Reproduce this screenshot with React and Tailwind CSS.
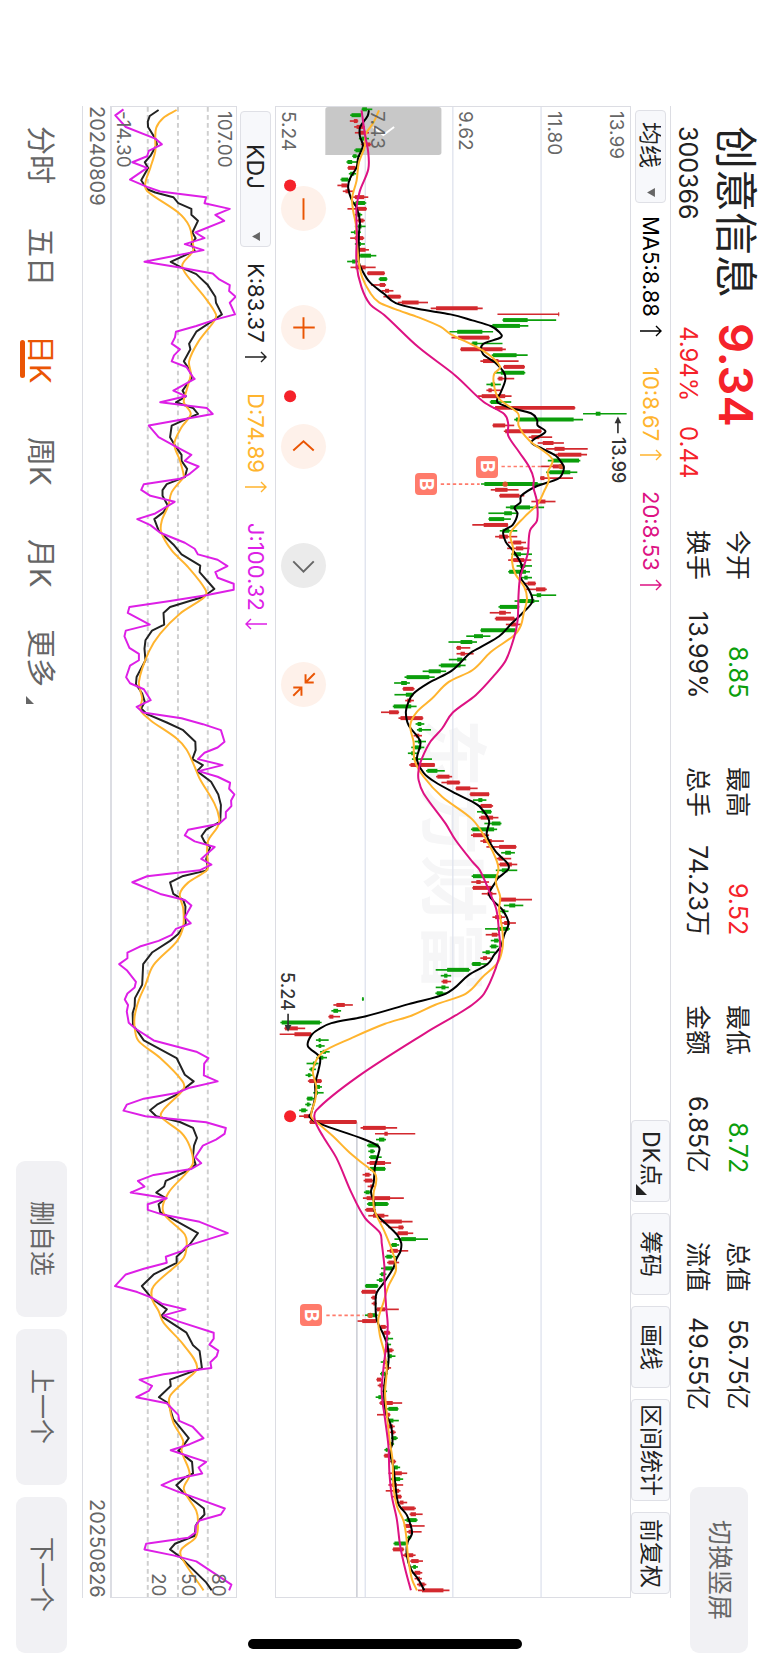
import React from "react";

const PITCH = 17.585;

// low, body low, body high, high, direction (1 = up, 0 = down)
const CANDLES = [
  [360,362,376,392,0],[326,330,358,358,0],[325,337,348,350,1],[338,345,365,370,1],[340,352,372,382,1],[352,360,375,382,0],[358,364,386,392,1],[338,342,362,368,0],[332,335,345,356,0],[315,318,332,348,0],
  [318,320,342,346,1],[322,326,338,344,0],[297,300,320,328,0],[288,300,318,322,1],[304,312,325,335,1],[335,340,368,380,1],[332,342,370,374,0],[318,345,374,376,1],[340,347,357,362,0],[340,350,366,370,1],
  [340,350,360,372,0],[328,338,348,358,0],[326,340,365,368,1],[340,348,358,370,0],[345,352,372,382,1],[350,356,388,404,0],[317,332,342,352,0],[327,342,372,402,1],[376,378,428,430,1],[411,414,435,437,0],
  [388,414,430,433,1],[420,430,442,455,1],[425,438,476,478,1],[468,480,530,558,1],[566,582,706,721,1],[765,946,949,949,1],[780,782,855,940,0],[745,750,832,857,0],[622,645,720,752,0],[628,648,740,742,1],
  [686,690,705,780,0],[654,656,780,790,1],[748,752,822,855,0],[714,722,768,828,1],[782,784,845,847,1],[755,775,845,848,0],[765,768,780,815,1],[732,745,758,775,0],[732,738,748,775,1],[706,718,788,807,1],
  [742,745,768,806,0],[752,758,995,997,1],[1020,1058,1072,1150,0],[815,820,992,1020,0],[750,752,788,815,1],[784,788,895,897,1],[858,866,890,928,1],[885,900,932,963,1],[910,935,965,1034,1],[938,945,1015,1032,1],
  [915,930,1008,1012,0],[895,930,960,965,1],[910,920,982,1003,0],[892,893,905,990,1],[716,726,885,900,0],[745,758,795,828,1],[770,772,830,845,1],[866,880,908,938,1],[790,803,862,904,0],[738,785,808,825,0],
  [738,740,785,805,0],[690,724,796,797,1],[772,780,800,824,0],[758,770,796,824,1],[796,812,836,850,1],[794,820,842,860,1],[806,815,835,868,0],[797,812,845,866,1],[822,832,848,868,0],[797,800,850,862,0],
  [832,845,855,868,0],[845,855,878,880,1],[850,880,908,912,1],[868,882,895,940,0],[816,830,875,889,0],[768,772,828,830,0],[742,770,790,805,1],[757,760,815,818,1],[790,805,820,838,1],[714,716,818,820,0],
  [672,695,722,744,0],[619,655,690,704,0],[642,644,656,684,1],[643,655,668,694,1],[620,645,660,672,0],[590,596,655,670,0],[542,560,596,612,0],[488,494,562,578,0],[457,478,495,504,0],[482,484,515,518,1],
  [458,492,512,515,0],[490,496,508,516,1],[453,456,508,524,0],[418,442,470,472,1],[470,476,542,544,1],[521,527,538,547,0],[525,530,540,567,0],[515,522,532,540,1],[518,528,538,552,0],[508,518,538,547,0],
  [498,508,518,525,0],[510,518,528,570,0],[502,506,578,579,1],[552,556,586,608,0],[582,586,622,630,1],[598,614,652,654,1],[640,642,684,706,1],[682,684,740,741,1],[692,708,720,732,0],[708,715,748,752,1],
  [704,718,746,748,0],[710,715,752,768,1],[726,748,774,777,0],[686,690,755,764,0],[686,692,728,740,1],[714,722,748,784,1],[732,770,820,822,1],[776,788,805,817,0],[760,768,782,806,1],[764,772,808,824,1],
  [760,778,795,824,0],[688,692,765,770,0],[687,702,715,740,1],[690,692,748,750,1],[718,735,750,762,1],[770,772,820,868,1],[784,800,818,842,0],[772,778,788,798,0],[750,758,778,788,1],[776,785,802,820,1],
  [728,765,798,802,0],[730,748,765,770,1],[745,755,768,772,0],[742,746,762,768,0],[720,730,742,757,0],[714,722,734,745,1],[688,690,715,735,0],[581,615,680,684,0],[596,606,616,627,0],[598,602,616,627,1],
  [581,598,610,620,0],[580,584,602,615,0],[361,362,366,367,0],[276,285,310,334,1],[270,276,290,299,0],[261,264,276,296,1],[118,122,236,241,0],[130,132,170,192,1],[116,160,210,212,1],[224,232,238,262,0],
  [224,232,240,250,0],[236,244,254,265,0],[225,236,246,257,0],[196,215,225,232,0],[204,208,216,224,0],[193,200,208,218,0],[200,204,240,242,1],[220,226,236,242,0],[216,222,230,247,0],[196,198,214,220,0],
  [192,197,205,210,0],[174,180,194,199,0],[174,188,204,208,1],[204,206,345,346,1],[357,364,432,466,1],[400,428,438,520,1],[403,412,428,433,0],[376,380,410,412,0],[380,386,396,400,0],[382,386,405,420,0],
  [376,384,430,448,1],[380,385,430,432,0],[363,370,384,389,1],[366,370,392,395,1],[378,386,392,402,1],[367,372,384,390,0],[364,375,445,486,1],[376,380,438,441,0],[370,374,398,402,1],[380,394,428,440,1],
  [415,424,480,512,1],[440,470,484,486,1],[460,468,498,514,1],[458,478,522,558,0],[446,450,465,472,0],[436,444,468,499,1],[430,434,450,465,0],[436,440,458,472,1],[418,430,452,458,0],[414,418,430,434,0],
  [405,412,422,428,0],[370,372,408,410,0],[359,361,402,404,1],[388,392,402,405,1],[390,395,402,405,1],[403,406,430,471,1],[370,378,404,408,0],[348,362,404,406,1],[412,416,432,438,1],[422,426,444,446,1],
  [432,436,440,454,0],[430,434,440,448,0],[426,432,452,456,1],[438,442,450,461,0],[417,424,434,440,0],[428,434,442,448,1],[415,418,430,438,0],[404,406,418,422,1],[408,413,422,427,1],[418,424,432,436,0],
  [402,410,418,424,0],[413,416,453,481,1],[434,440,468,470,0],[406,434,444,446,1],[438,442,455,471,0],[434,440,454,459,1],[444,450,458,462,1],[448,454,464,468,0],[440,446,454,457,0],[428,432,438,442,0],
  [426,428,445,447,1],[444,450,460,463,1],[452,457,468,475,0],[440,456,480,496,1],[444,450,475,484,0],[440,450,465,484,1],[432,456,472,476,1],[450,458,478,480,1],[465,474,485,496,1],[476,480,518,522,1],
  [503,506,522,542,1],[488,494,524,527,0],[486,490,510,548,1],[494,500,508,539,1],[493,498,505,508,0],[455,458,492,495,0],[452,454,485,487,1],[482,488,514,521,1],[505,508,530,543,1],[508,514,522,528,0],
  [512,518,535,541,1],[518,525,534,540,1],[525,530,548,553,1],[528,540,604,622,1],
];

// Each series is stored in four segments of 1170 units along the time axis.
const join = (parts) =>
  parts.flatMap((part, seg) =>
    part.trim().split(/\s+/).map((pair) => {
      const [v, t] = pair.split(",").map(Number);
      return [v, t + seg * 1170];
    })
  );

const straight = (pts) => "M" + pts.map((p) => p.join(" ")).join("L");

const smooth = (pts) => {
  let d = `M${pts[0][0]} ${pts[0][1]}`;
  for (let i = 0; i < pts.length - 1; i++) {
    const a = pts[i - 1] || pts[i];
    const b = pts[i];
    const c = pts[i + 1];
    const e = pts[i + 2] || c;
    const k = (c[1] - b[1]) / 3;
    const m1 = (c[0] - a[0]) / (c[1] - a[1] || 1);
    const m2 = (e[0] - b[0]) / (e[1] - b[1] || 1);
    d += `C${(b[0] + m1 * k).toFixed(1)} ${(b[1] + k).toFixed(1)} ${(c[0] - m2 * k).toFixed(1)} ${(c[1] - k).toFixed(1)} ${c[0]} ${c[1]}`;
  }
  return d;
};

const MA5 = join([
  "382,58 378,75 356,108 355,135 364,165 350,200 345,230 326,262 320,290 332,330 345,350 355,390 352,430 352,500 352,515 360,535 385,575 428,610 462,637 530,655 625,671 690,689 745,706 770,724 775,740 722,760 722,790 757,815 785,847 788,870 775,905 765,935 805,952 865,968 883,988 885,1005 908,1023 866,1055 900,1075 938,1095 955,1115 963,1130 958,1150 945,1165",
  "880,18 836,46 833,66 816,81 825,99 810,134 783,152 790,185 815,215 838,257 833,290 857,325 869,363 843,395 805,432 770,468 716,500 682,520 628,572 560,608 515,640 498,670 492,697 500,735 535,784 525,837 545,878 578,905 640,940 690,965 715,983 740,1022 733,1065 760,1115 795,1150 797,1168",
  "766,25 760,35 740,72 752,92 780,120 798,160 785,195 775,230 755,255 735,283 680,315 610,372 500,403 370,440 270,460 230,480 210,497 200,529 235,562 232,600 222,640 222,680 210,730 205,742 235,762 365,808 410,830 411,850 400,890 396,940 388,967 398,1000 400,1030 430,1060 465,1095 478,1120 476,1145 464,1168",
  "455,25 430,65 405,100 402,130 405,180 425,225 438,262 440,310 430,360 427,400 432,460 448,500 452,550 445,580 455,625 460,670 470,735 495,768 508,805 510,825 497,850 495,890 508,932 530,962 547,994",
]);
const MA10 = join([
  "412,58 395,95 372,130 370,165 352,215 345,270 332,320 335,360 343,400 346,450 352,515 362,560 385,605 412,635 460,655 530,680 595,708 625,730 722,780 773,828 755,850 755,885 770,925 826,968 828,1005 860,1050 928,1105 915,1145",
  "918,0 905,30 885,70 845,110 808,150 803,168 812,205 808,240 818,280 845,320 853,355 843,400 835,435 815,465 745,515 690,570 620,605 570,655 525,695 505,735 515,785 518,840 545,890 600,950 690,1018 735,1085 760,1135 768,1168",
  "760,35 773,80 770,120 780,185 780,235 765,280 720,322 670,372 580,405 510,437 430,462 330,505 245,547 215,600 225,650 222,690 210,740 235,765 275,800 320,845 355,875 400,912 403,940 396,970 398,1020 430,1090 450,1140",
  "460,5 462,35 440,80 425,130 410,180 415,230 428,280 435,330 430,400 435,460 443,540 452,600 455,680 465,740 485,785 493,830 498,890 510,960 525,994",
]);
const MA20 = join([
  "360,58 370,130 380,185 380,235 355,300 345,350 346,430 345,520 360,590 385,640 430,675 530,770 640,855 725,935 785,970 797,1000 797,1035 830,1085 860,1130 873,1165",
  "872,20 882,60 883,120 862,150 855,220 833,290 828,340 825,420 815,470 790,540 760,580 700,645 632,697 600,745 565,785 540,835 530,870 530,900 545,940 610,1030 640,1080 690,1145",
  "712,0 745,75 762,120 770,190 773,240 760,295 725,372 690,405 640,437 550,490 350,620 225,722 222,755 245,800 285,865 330,970 370,1045 415,1090 420,1120",
  "428,20 428,50 433,140 438,200 432,270 425,330 420,400 430,480 440,560 443,640 450,710 465,780 475,860 490,930 507,994",
]);
const K = join([
  "475,57 448,75 442,92 443,108 465,143 470,160 450,195 433,214 443,231 422,268 440,295 465,305 520,319 535,337 575,354 575,372 595,390 578,425 588,442 575,460 585,480 512,513 550,533 590,550 625,583 648,618 650,636 668,671 640,690 590,723 568,759 572,776 552,812 568,835 577,860 548,900 558,917 528,935 580,952 595,970 515,1005 510,1040 525,1065 545,1093 545,1111 562,1135 555,1160",
  "500,11 487,29 487,46 503,75 490,95 462,116 475,150 520,192 545,222 602,256 600,275 645,326 610,350 510,380 490,398 492,433 455,451 435,480 432,505 435,540 408,590 406,612 425,640 433,665 422,685 440,702 500,727 550,750 587,785 588,810 578,837 610,855 592,873 635,905 657,943 665,975 663,1025 620,1049 606,1068 615,1085 632,1101 620,1137 625,1160",
  "620,2 550,18 510,37 520,72 550,90 557,110 555,140 558,160 535,192 510,213 455,248 428,283 425,345 403,385 402,410 396,430 397,465 430,512 530,565 555,615 582,635 530,675 470,705 449,722 468,740 540,757 580,775 592,805 583,828 580,860 588,885 560,905 497,934 492,951 468,969 497,986 475,1004 480,1028 595,1091 570,1125 530,1162",
  "530,10 460,45 424,80 455,118 500,150 483,170 560,220 580,258 600,275 607,326 510,361 512,380 476,414 505,432 520,480 567,537 550,560 535,575 577,608 580,643 555,655 529,678 550,700 613,748 615,766 597,785 588,800 585,830 525,854 510,871 540,893 620,970 637,994",
]);
const D = join([
  "530,57 490,80 468,110 465,150 465,180 450,230 435,275 440,300 535,365 568,405 578,450 580,480 548,520 555,545 620,625 650,671 645,690 595,755 568,812 573,850 560,900 552,935 573,970 545,1010 523,1060 540,1110 552,1160",
  "543,0 515,35 505,75 485,120 483,155 515,210 565,260 618,328 615,350 540,400 480,460 445,515 415,605 425,655 420,690 450,720 530,775 560,808 585,860 600,895 645,970 660,1015 655,1040 625,1085 625,1160",
  "620,3 565,38 540,72 550,115 550,170 530,215 460,285 435,345 415,390 402,440 403,480 415,515 480,565 548,635 550,660 490,720 483,742 545,790 570,830 580,880 560,910 505,970 490,1030 555,1095 560,1135",
  "548,0 460,80 455,118 475,155 490,190 550,255 593,325 555,365 510,410 508,440 520,490 550,545 545,575 570,645 552,690 590,755 595,790 588,835 545,870 545,895 612,994",
]);
const J = join([
  "368,55 343,73 375,108 465,143 485,160 445,180 440,196 395,214 440,231 388,266 440,288 480,302 620,319 615,337 692,354 648,372 675,390 587,425 615,442 555,460 612,478 432,513 540,530 640,548 660,566 692,583 690,601 710,618 692,636 708,671 650,686 590,706 528,723 525,740 515,759 540,776 522,794 515,812 560,829 580,860 585,865 520,900 558,917 480,935 622,952 640,970 445,1005 475,1040 525,1067 575,1093 555,1111 597,1128 570,1150 545,1164",
  "430,11 422,28 450,46 524,64 465,99 410,116 450,134 480,157 555,187 585,205 595,222 655,238 685,257 648,275 655,292 704,310 704,328 620,345 510,362 386,380 381,398 448,433 375,451 371,468 386,503 415,521 415,540 388,556 376,591 388,609 430,627 451,660 408,680 428,697 545,714 610,732 665,750 676,785 655,802 615,818 595,837 670,855 597,873 655,890 693,908 690,926 706,943 696,961 697,978 680,996 680,1013 660,1031 565,1049 555,1066 585,1084 646,1101 605,1137 636,1154",
  "600,1 440,19 395,37 480,72 555,90 575,107 555,142 573,160 528,177 515,195 475,213 418,230 380,248 380,265 355,283 378,301 406,336 402,353 380,371 372,389 382,406 378,425 384,459 405,477 460,512 590,546 627,565 614,582 613,617 655,635 570,654 530,670 430,687 378,705 368,723 435,740 620,758 680,775 676,793 650,810 610,828 587,863 605,881 575,898 460,916 412,934 432,951 390,969 500,986 442,1004 442,1021 490,1036 600,1057 686,1091 560,1130 545,1145 497,1162",
  "500,10 430,28 375,45 342,80 410,98 455,115 485,133 557,150 490,168 535,186 643,220 643,238 630,256 657,274 652,291 633,309 636,326 490,345 417,361 455,380 445,395 407,414 500,432 535,467 538,485 578,502 612,537 570,555 512,573 620,608 597,625 608,643 525,660 484,678 530,696 590,717 677,748 665,766 600,784 588,800 588,820 565,836 437,854 432,871 520,889 590,907 697,977 690,994",
]);

// Signal markers: badge value, time, dash start, dash end, dot value
const SIGNALS = [
  [734, 1128, 777, 895, 955],
  [553, 1181, 596, 712, 788],
  [210, 3678, 255, 366, 386],
];

function Arrow({ down }) {
  return (
    <svg className="h-3 w-[22px] shrink-0" viewBox="0 0 22 12" fill="none" stroke="currentColor" strokeWidth="1.4" aria-hidden="true">
      {down ? <path d="M22 6H1M6 1 1 6l5 5" /> : <path d="M0 6h21M16 1l5 5-5 5" />}
    </svg>
  );
}

function Picker({ label, options, className }) {
  return (
    <div className={"relative w-[31px] " + className}>
      <select
        aria-label={label}
        className="h-full w-full appearance-none rounded-[4px] border border-[#dfe0e6] bg-[#f7f8fb] pr-1 pb-6 text-center text-[23px] [text-orientation:sideways] [writing-mode:vertical-rl]"
      >
        {options.map((o) => (
          <option key={o}>{o}</option>
        ))}
      </select>
      <svg className="pointer-events-none absolute bottom-1.5 left-3 h-[9px] w-[8px]" viewBox="0 0 7 8" fill="#666" aria-hidden="true">
        <path d="M0 4 7 0v8z" />
      </svg>
    </div>
  );
}

function Reading({ children, color, down }) {
  return (
    <span className={"flex items-center gap-2 " + color}>
      {children}
      <Arrow down={down} />
    </span>
  );
}

function PriceChart() {
  return (
    <svg className="pointer-events-none absolute inset-0 h-full w-full" viewBox="105 48 1055 4476" preserveAspectRatio="none" fill="none" role="img" aria-label="日K线图">
      {[371, 632, 895].map((x) => (
        <path key={x} d={`M${x} 48V4524`} stroke="#dfe3ee" strokeWidth="4" />
      ))}
      <path d="M346 3098V4524" stroke="#cfd1d8" strokeWidth="5" />
      <path d="M260 48h330a8 8 0 0 1 8 8v128a8 8 0 0 1-8 8H252V56a8 8 0 0 1 8-8z" fill="#c8c8c8" />
      {SIGNALS.map(([, y, a, b]) => (
        <path key={y} d={`M${a} ${y}H${b}`} stroke="#ff7b6b" strokeWidth="5" strokeDasharray="10 8" />
      ))}
      {CANDLES.map(([lo, bl, bh, hi, up], i) => {
        const y = 55 + i * PITCH;
        const c = up ? "#d3292e" : "#0b9e0b";
        return (
          <g key={i} stroke={c}>
            <path d={`M${lo} ${y}H${hi}`} strokeWidth="5" />
            <path d={`M${bl} ${y}H${bh}`} strokeWidth="12" />
          </g>
        );
      })}
      {SIGNALS.map(([, y, , , dot]) => (
        <circle key={y} cx={dot} cy={y} r="8" fill="#d8562a" />
      ))}
      <path d={smooth(MA5)} stroke="#000" strokeWidth="6" />
      <path d={smooth(MA10)} stroke="#ffb42e" strokeWidth="6" />
      <path d={smooth(MA20)} stroke="#dd1283" strokeWidth="6" />
      <path d="M457 108 425 132 394 108" stroke="#fff" strokeWidth="6" />
      <path d="M1124 1028V990" stroke="#333" strokeWidth="5" />
      <path d="M1124 978l10 20h-20z" fill="#333" />
      <path d="M141 2772V2814" stroke="#333" strokeWidth="5" />
      <path d="M141 2826l10-20h-20z" fill="#333" />
      {[[147, 284], [147, 917], [147, 3080]].map(([x, y]) => (
        <circle key={y} cx={x} cy={y} r="18" fill="#f5222a" />
      ))}
    </svg>
  );
}

function KdjChart() {
  return (
    <svg className="absolute inset-0 h-full w-full" viewBox="333 48 378 4476" preserveAspectRatio="none" fill="none" role="img" aria-label="KDJ指标图">
      {[442, 534, 625].map((x) => (
        <path key={x} d={`M${x} 48V4524`} stroke="#cfcfcf" strokeWidth="6" strokeDasharray="14 10" />
      ))}
      <path d={straight(K)} stroke="#222" strokeWidth="6" strokeLinejoin="round" />
      <path d={smooth(D)} stroke="#ffb42e" strokeWidth="6" />
      <path d={straight(J)} stroke="#dd1fe6" strokeWidth="6" strokeLinejoin="round" />
    </svg>
  );
}

const STATS = [
  ["今开", "8.85", "text-[#0b9e0b]", "换手", "13.99%"],
  ["最高", "9.52", "text-[#f5222a]", "总手", "74.23万"],
  ["最低", "8.72", "text-[#0b9e0b]", "金额", "6.85亿"],
  ["总值", "56.75亿", "text-[#222]", "流值", "49.55亿"],
];

const CONTROLS = [
  ["缩小", "M22 12v21"],
  ["放大", "M22 12v21M12 22h21"],
  ["左移", "M12 26 22 17l10 9"],
  ["右移", "M12 18l10 10 10-10"],
  ["退出全屏", "M33 11 24 20M24 12v8h8M12 33l8-8M12 25h8v8"],
];

const AXIS = [
  ["13.99", "right-[4px]"],
  ["11.80", "right-[66px]"],
  ["9.62", "right-[155px]"],
  ["7.43", "right-[243px]"],
  ["5.24", "right-[332px]"],
];

const toolButton = "flex w-[39px] items-center justify-center rounded-[4px] border border-[#dfe0e6] bg-[#f7f8fb] [text-orientation:sideways] [writing-mode:vertical-rl]";
const footButton = "h-[156px] w-[51px] rounded-[9px] bg-[#f1f1f4] text-[25px] leading-none text-[#666] [text-orientation:sideways] [writing-mode:vertical-rl]";

export default function App() {
  return (
    <div className="relative flex h-screen w-full flex-col overflow-hidden bg-white font-['Inter','Noto_Sans_CJK_SC',sans-serif] text-[#222] [text-orientation:sideways] [writing-mode:vertical-rl]">
      <header className="flex w-[98px] shrink-0 items-center pt-[126px] pb-3">
        <div className="flex h-[404px] w-full shrink-0 flex-col pr-2">
          <div className="flex w-[50px] items-center gap-[25px]">
            <h1 className="text-[43px] leading-[50px] font-normal">创意信息</h1>
            <strong className="text-[47px] leading-[50px] font-semibold text-[#f5222a]">9.34</strong>
          </div>
          <div className="flex w-[46px] items-center text-[25px] leading-[46px]">
            <span className="h-[200px]">300366</span>
            <span className="flex gap-[25px] text-[24px] text-[#f5222a]">
              <span>4.94%</span>
              <span>0.44</span>
            </span>
          </div>
        </div>
        <dl className="mb-2 grid min-h-0 w-full flex-1 grid-cols-4 pr-[11px] text-[25px] leading-[40px]">
          {STATS.map(([a, av, color, b, bv]) => (
            <div key={a} className="flex flex-col pb-[69px]">
              <div className="flex justify-between">
                <dt>{a}</dt>
                <dd className={color}>{av}</dd>
              </div>
              <div className="flex justify-between">
                <dt>{b}</dt>
                <dd>{bv}</dd>
              </div>
            </div>
          ))}
        </dl>
        <button className="mr-0.5 h-[166px] w-[58px] shrink-0 rounded-[9px] bg-[#f1f1f4] text-[25px] leading-none text-[#666] [text-orientation:sideways] [writing-mode:vertical-rl]">切换竖屏</button>
      </header>

      <main className="mt-[106px] mb-[67px] flex min-w-0 flex-1 flex-col">
        <div className="flex w-[40px] shrink-0 items-center border-r border-[#dcdde3] pt-1 pb-1 text-[23px] leading-none">
          <Picker label="主图指标" options={["均线"]} className="h-[93px]" />
          <div className="flex flex-1 items-center gap-[30px] pt-[13px] text-[22px]">
            <Reading color="text-black">MA5:8.88</Reading>
            <Reading color="text-[#ffb42e]">10:8.67</Reading>
            <Reading color="text-[#dd1283]">20:8.53</Reading>
          </div>
          <div className="flex gap-[11px]">
            <button className={toolButton + " relative h-[82px] pb-1"}>
              DK点
              <svg className="absolute bottom-1.5 left-1 h-[11px] w-[11px]" viewBox="0 0 11 11" fill="#222" aria-hidden="true">
                <path d="M0 0v11h11z" />
              </svg>
            </button>
            <button className={toolButton + " h-[82px]"}>筹码</button>
            <button className={toolButton + " h-[82px]"}>画线</button>
            <button className={toolButton + " h-[102px]"}>区间统计</button>
            <button className={toolButton + " h-[82px]"}>前复权</button>
          </div>
        </div>

        <section className="relative min-w-0 flex-1 border border-[#dcdde3]">
          <div className="absolute top-[612px] left-[139px] text-[68px] leading-[76px] font-bold text-[#f6f6f7]" aria-hidden="true">东方财富</div>
          <div className="absolute top-[79px] left-[5px] flex gap-[74px]">
            {CONTROLS.map(([name, d]) => (
              <button key={name} aria-label={name} className={"h-[45px] w-[45px] rounded-full " + (name === "右移" ? "bg-[#ebebeb] text-[#666]" : "bg-[#fef1ea] text-[#ea5504]")}>
                <svg className="h-[45px] w-[45px]" viewBox="0 0 44 44" fill="none" stroke="currentColor" strokeWidth="1.9">
                  <path d={d} />
                </svg>
              </button>
            ))}
          </div>
          <PriceChart />
          {AXIS.map(([t, pos]) => (
            <span key={t} className={"absolute top-[4px] text-[19px] leading-[20px] text-[#666] " + pos}>{t}</span>
          ))}
          <span className="absolute top-[330px] right-[2px] text-[18px] leading-[20px] font-medium text-[#333]">13.99</span>
          <span className="absolute top-[865px] right-[333px] text-[18px] leading-[20px] font-medium text-[#333]">5.24</span>
          {SIGNALS.map(([x, y]) => (
            <span
              key={y}
              className="absolute flex h-[22px] w-[22px] -translate-x-1/2 -translate-y-1/2 items-center justify-center rounded-[4px] bg-[#ff7b6b] text-[19px] leading-none font-bold text-white"
              style={{ left: `${((x - 105) / 1055) * 100}%`, top: `${((y - 48) / 4476) * 100}%` }}
            >
              B
            </span>
          ))}
        </section>

        <div className="flex w-[38px] shrink-0 items-center pt-[5px] text-[22px] leading-none">
          <Picker label="副图指标" options={["KDJ"]} className="mr-0.5 h-[136px]" />
          <div className="flex items-center gap-[30px] pt-[16px]">
            <Reading color="text-[#222]">K:83.37</Reading>
            <Reading color="text-[#ffb42e]">D:74.89</Reading>
            <Reading color="text-[#dd1fe6]" down>J:100.32</Reading>
          </div>
        </div>

        <section className="relative w-[127px] shrink-0 border border-l-2 border-[#dcdde3] text-[19px] leading-[20px] text-[#666]">
          <KdjChart />
          <span className="absolute top-[4px] right-[2px]">107.00</span>
          <span className="absolute top-[4px] left-[1px]">-14.30</span>
          <span className="absolute bottom-0 left-[36px]">20</span>
          <span className="absolute bottom-0 left-[66px]">50</span>
          <span className="absolute bottom-0 left-[96px]">80</span>
        </section>

        <div className="flex w-[28px] shrink-0 justify-between border-l border-[#dcdde3] text-[20px] leading-[26px] text-[#666]">
          <time>20240809</time>
          <time>20250826</time>
        </div>
      </main>

      <footer className="flex w-[82px] shrink-0 items-center justify-between pt-[104px] pb-3">
        <nav className="flex pr-0.5 text-[29px] leading-[40px] text-[#666]">
          {["分时", "五日", "日K", "周K", "月K", "更多"].map((t) => (
            <button
              key={t}
              aria-current={t === "日K" ? "page" : undefined}
              className={"relative flex h-[102px] items-center justify-center [text-orientation:sideways] [writing-mode:vertical-rl] " + (t === "日K" ? "text-[#ea5504]" : t === "更多" ? "pb-3.5" : "")}
            >
              {t}
              {t === "日K" && <span className="absolute left-0 h-[38px] w-[5px] rounded-full bg-[#ea5504]" />}
              {t === "更多" && (
                <svg className="absolute bottom-3 left-1.5 h-2 w-2" viewBox="0 0 8 8" fill="#666" aria-hidden="true">
                  <path d="M0 0v8h8z" />
                </svg>
              )}
            </button>
          ))}
        </nav>
        <div className="flex gap-3">
          <button className={footButton}>删自选</button>
          <button className={footButton}>上一个</button>
          <button className={footButton}>下一个</button>
        </div>
      </footer>

      <div className="absolute bottom-4 left-1/2 h-[10px] w-[274px] -translate-x-1/2 rounded-full bg-black" />
    </div>
  );
}
